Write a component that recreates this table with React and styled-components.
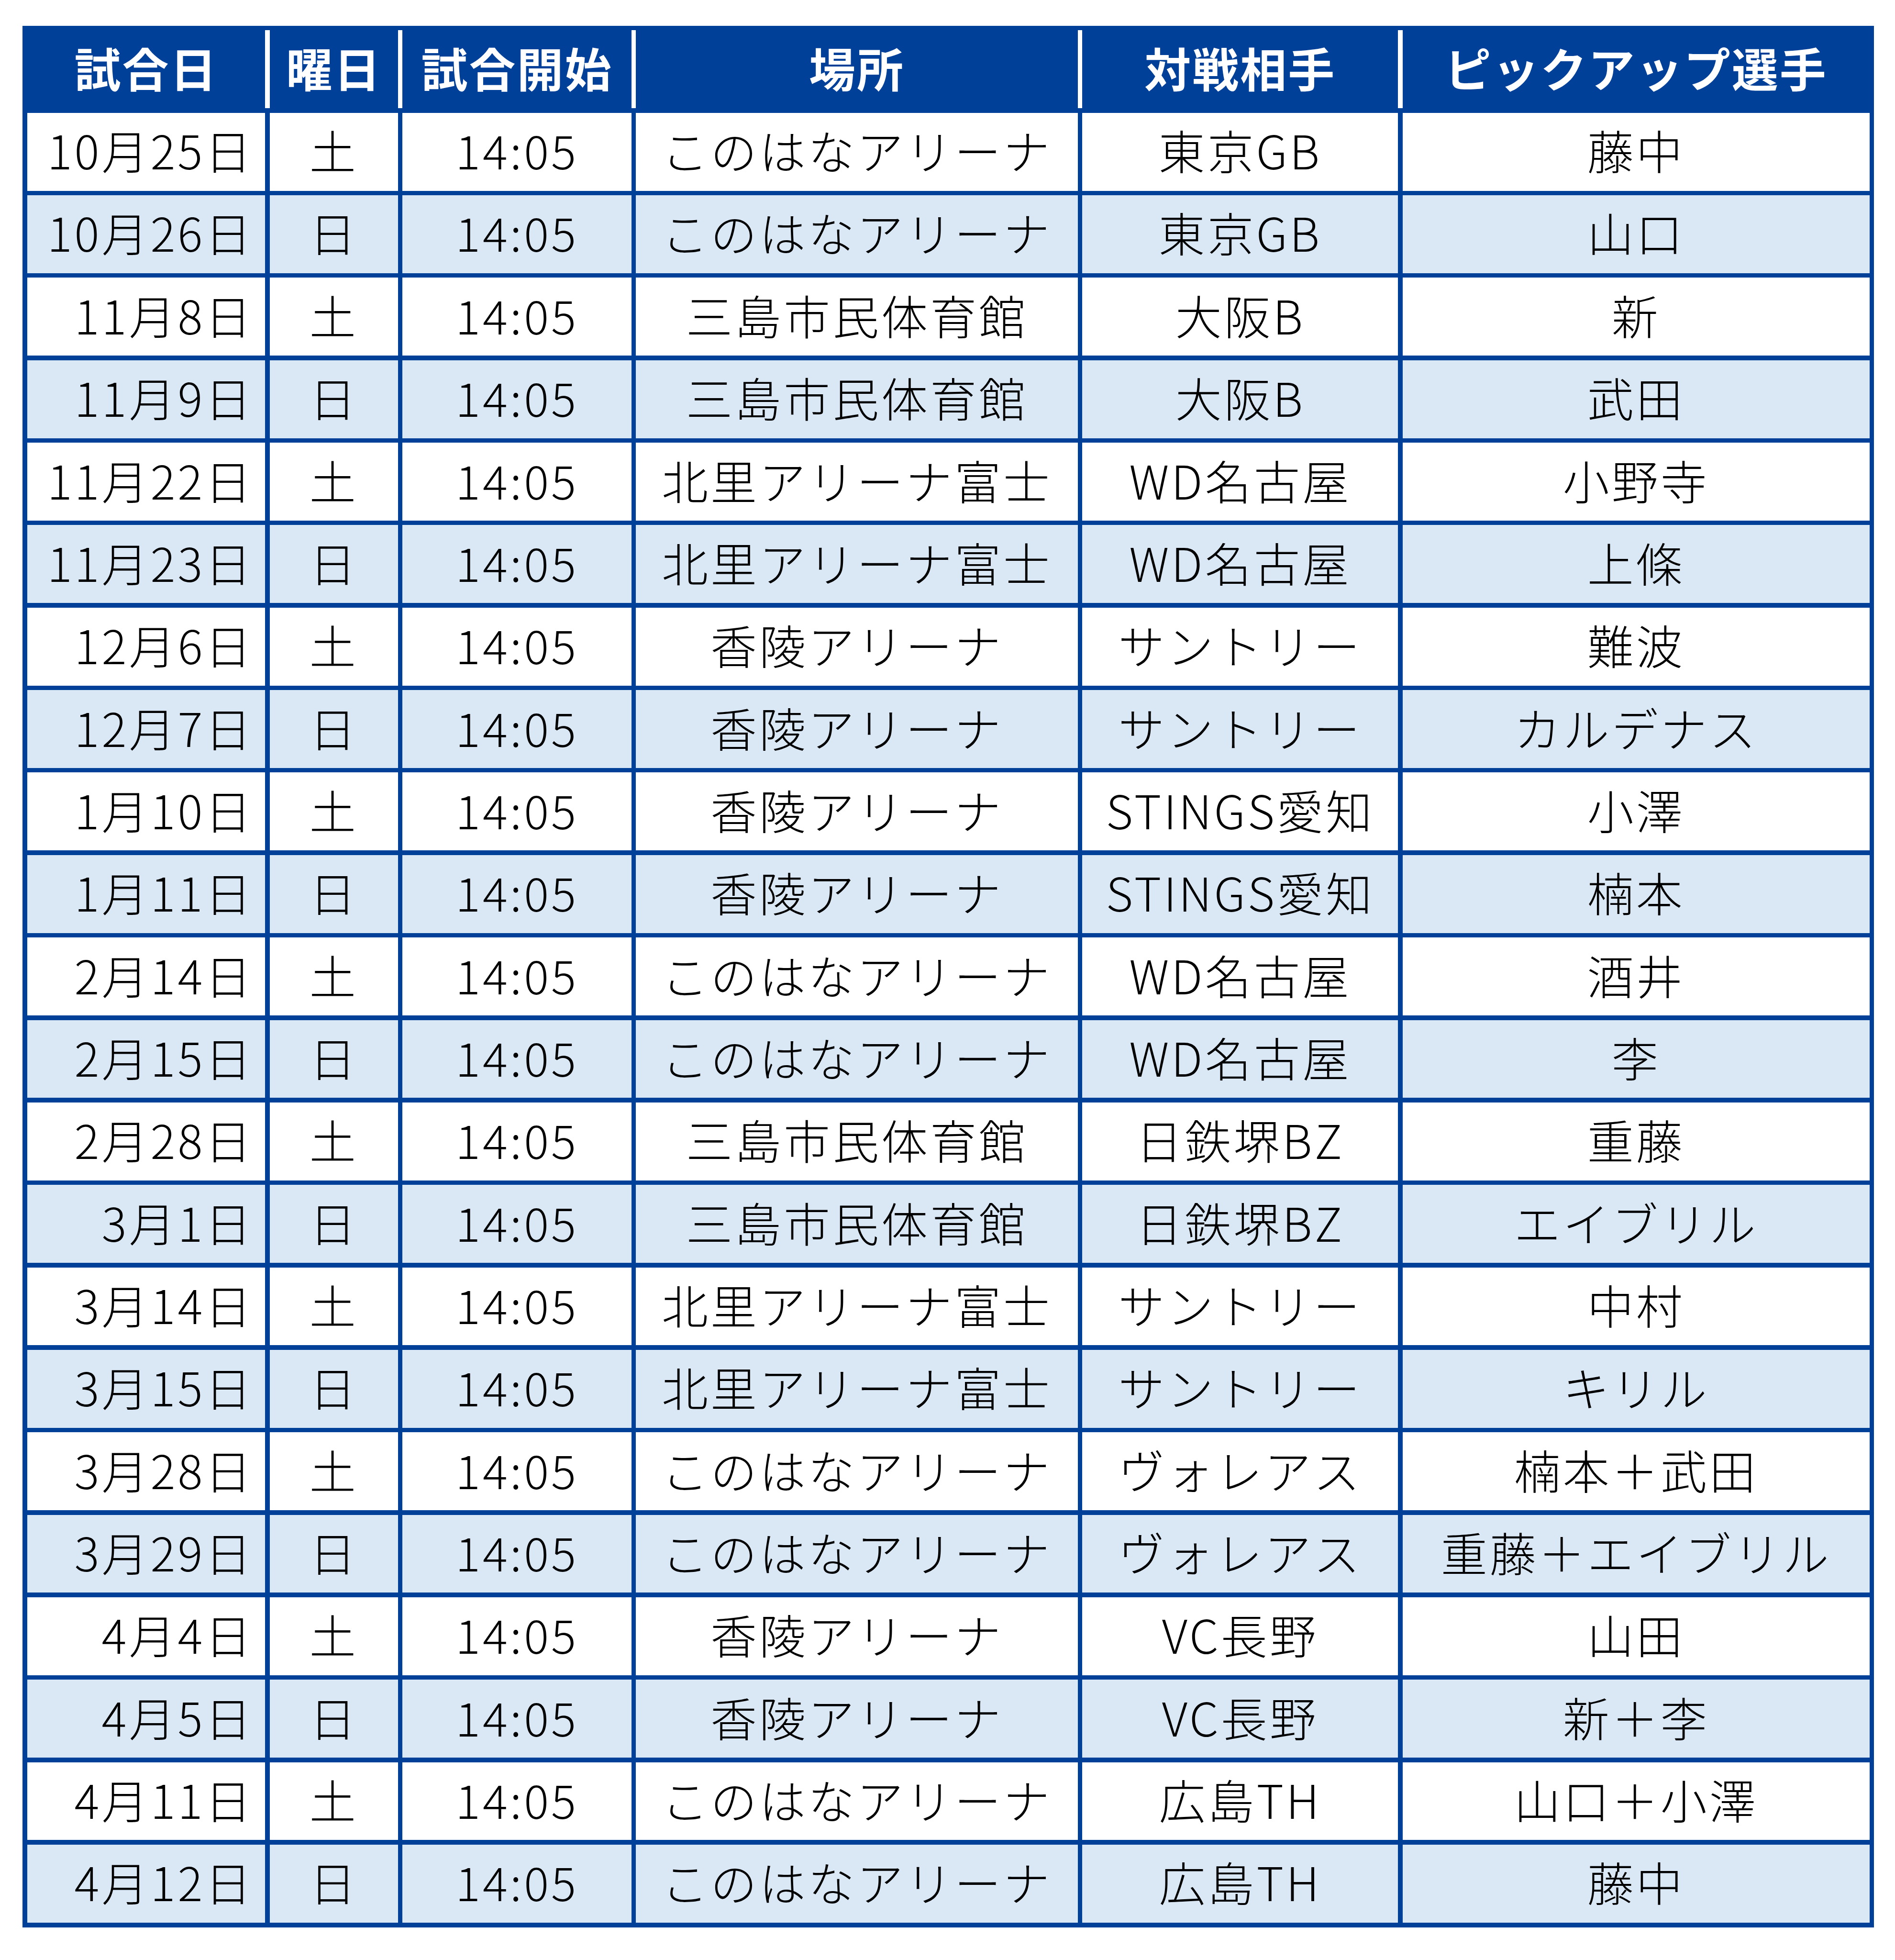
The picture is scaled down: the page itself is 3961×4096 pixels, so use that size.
import React from "react";
import styled, { createGlobalStyle } from "styled-components";

const BLUE = "#004098";
const LIGHT = "#dae8f6";
const COLS = "497.6px 268px 478.3px 923.5px 660.1px 975.8px";
const LINE = "9.55px";

const Global = createGlobalStyle`
  html, body { margin: 0; padding: 0; background: #ffffff; }
  body { font-family: "Noto Sans CJK JP", "Noto Sans", sans-serif; }
`;

const Page = styled.div`
  padding: 54px 0 0 47.1px;
`;

const Table = styled.div`
  display: inline-flex;
  flex-direction: column;
  gap: ${LINE};
  background: ${BLUE};
  padding: 9.4px 9.6px 10.1px 9.6px;
`;

const HeaderRow = styled.div`
  display: grid;
  grid-template-columns: ${COLS};
  column-gap: ${LINE};
  background: #ffffff;
`;

const HeaderCell = styled.div`
  height: 162.8px;
  box-sizing: border-box;
  padding-bottom: 10px;
  background: ${BLUE};
  color: #ffffff;
  font-weight: 700;
  font-size: 97px;
  letter-spacing: 3px;
  display: flex;
  align-items: center;
  justify-content: center;
  line-height: 1;
  white-space: nowrap;
`;

const BodyRow = styled.div`
  display: grid;
  grid-template-columns: ${COLS};
  column-gap: ${LINE};
`;

const Cell = styled.div`
  height: 162.8px;
  box-sizing: border-box;
  padding-bottom: 11px;
  background: ${(p) => (p.$alt ? LIGHT : "#ffffff")};
  color: #000000;
  font-weight: 300;
  font-size: 97px;
  letter-spacing: 5px;
  display: flex;
  align-items: center;
  justify-content: ${(p) => (p.$right ? "flex-end" : "center")};
  padding-right: ${(p) => (p.$right ? "24px" : "0")};
  line-height: 1;
  white-space: nowrap;
`;

const headers = ["試合日", "曜日", "試合開始", "場所", "対戦相手", "ピックアップ選手"];

const rows = [
  ["10月25日", "土", "14:05", "このはなアリーナ", "東京GB", "藤中"],
  ["10月26日", "日", "14:05", "このはなアリーナ", "東京GB", "山口"],
  ["11月8日", "土", "14:05", "三島市民体育館", "大阪B", "新"],
  ["11月9日", "日", "14:05", "三島市民体育館", "大阪B", "武田"],
  ["11月22日", "土", "14:05", "北里アリーナ富士", "WD名古屋", "小野寺"],
  ["11月23日", "日", "14:05", "北里アリーナ富士", "WD名古屋", "上條"],
  ["12月6日", "土", "14:05", "香陵アリーナ", "サントリー", "難波"],
  ["12月7日", "日", "14:05", "香陵アリーナ", "サントリー", "カルデナス"],
  ["1月10日", "土", "14:05", "香陵アリーナ", "STINGS愛知", "小澤"],
  ["1月11日", "日", "14:05", "香陵アリーナ", "STINGS愛知", "楠本"],
  ["2月14日", "土", "14:05", "このはなアリーナ", "WD名古屋", "酒井"],
  ["2月15日", "日", "14:05", "このはなアリーナ", "WD名古屋", "李"],
  ["2月28日", "土", "14:05", "三島市民体育館", "日鉄堺BZ", "重藤"],
  ["3月1日", "日", "14:05", "三島市民体育館", "日鉄堺BZ", "エイブリル"],
  ["3月14日", "土", "14:05", "北里アリーナ富士", "サントリー", "中村"],
  ["3月15日", "日", "14:05", "北里アリーナ富士", "サントリー", "キリル"],
  ["3月28日", "土", "14:05", "このはなアリーナ", "ヴォレアス", "楠本＋武田"],
  ["3月29日", "日", "14:05", "このはなアリーナ", "ヴォレアス", "重藤＋エイブリル"],
  ["4月4日", "土", "14:05", "香陵アリーナ", "VC長野", "山田"],
  ["4月5日", "日", "14:05", "香陵アリーナ", "VC長野", "新＋李"],
  ["4月11日", "土", "14:05", "このはなアリーナ", "広島TH", "山口＋小澤"],
  ["4月12日", "日", "14:05", "このはなアリーナ", "広島TH", "藤中"],
];

export default function App() {
  return (
    <>
      <Global />
      <Page>
        <Table>
          <HeaderRow>
            {headers.map((h) => (
              <HeaderCell key={h}>{h}</HeaderCell>
            ))}
          </HeaderRow>
          {rows.map((r, i) => (
            <BodyRow key={i}>
              {r.map((c, j) => (
                <Cell key={j} $alt={i % 2 === 1} $right={j === 0}>
                  {c}
                </Cell>
              ))}
            </BodyRow>
          ))}
        </Table>
      </Page>
    </>
  );
}
